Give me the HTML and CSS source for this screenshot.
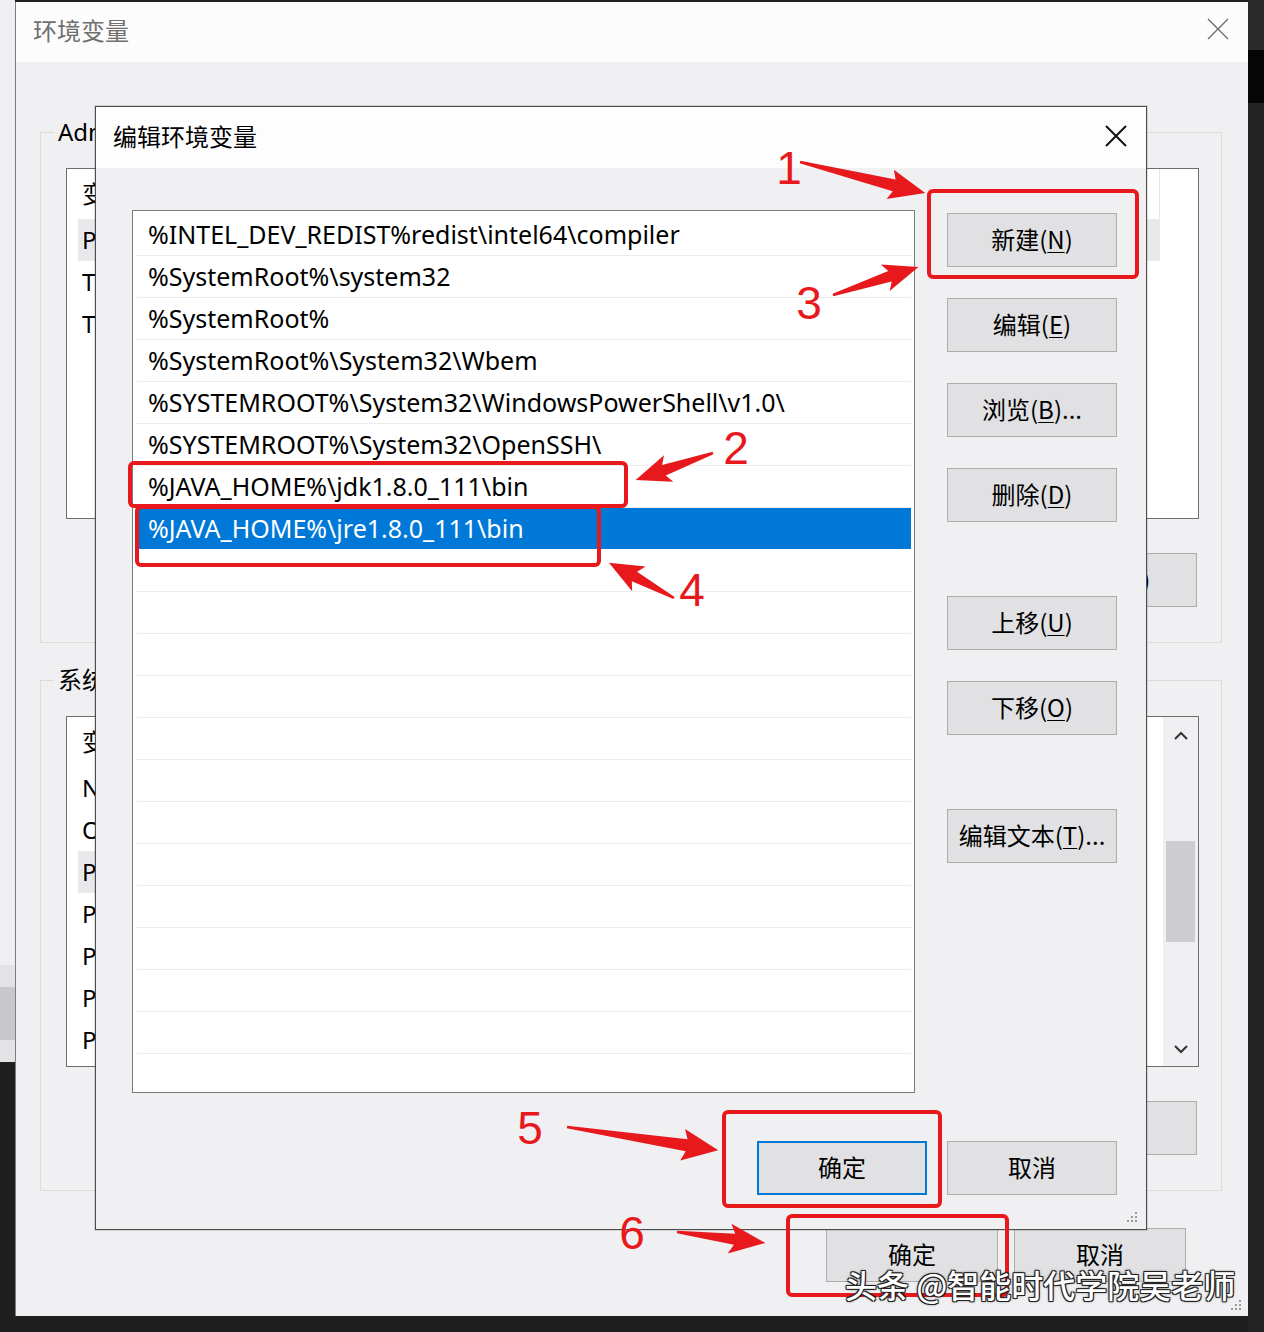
FILE: index.html
```html
<!DOCTYPE html>
<html lang="zh-CN">
<head>
<meta charset="utf-8">
<title>编辑环境变量</title>
<link rel="stylesheet" href="styles.css">
</head>
<body>
<div class="screen">
  <div class="edge-left">
    <div class="edge-fill"></div>
    <div class="edge-btn"><div class="edge-btn-face"></div></div>
  </div>

  <div class="env-window">
    <div class="titlebar">
      <span class="title">环境变量</span>
      <svg class="close-outer" width="22" height="22" viewBox="0 0 22 22"><path d="M1 1L21 21M21 1L1 21" stroke="#6b6b6b" stroke-width="1.3" fill="none"/></svg>
    </div>
    <div class="env-body">
      <div class="group">
        <span class="legend">Administrator 的用户变量</span>
        <div class="listview">
          <div class="lv-rows">
            <div class="lv-head">变量</div>
            <div class="lv-row hl">Path</div>
            <div class="lv-row">TEMP</div>
            <div class="lv-row">TMP</div>
          </div>
        </div>
        <div class="btn-row">
          <div class="obtn">新建(<u>N</u>)...</div>
          <div class="obtn">编辑(<u>E</u>)...</div>
          <div class="obtn">删除(<u>D</u>)</div>
        </div>
      </div>

      <div class="group">
        <span class="legend">系统变量(<u>S</u>)</span>
        <div class="listview">
          <div class="lv-rows">
            <div class="lv-head">变量</div>
            <div class="lv-row">NUMBER_OF_PROCESSORS</div>
            <div class="lv-row">OS</div>
            <div class="lv-row hl">Path</div>
            <div class="lv-row">PATHEXT</div>
            <div class="lv-row">PROCESSOR_ARCHITECTURE</div>
            <div class="lv-row">PROCESSOR_IDENTIFIER</div>
            <div class="lv-row">PROCESSOR_LEVEL</div>
          </div>
          <div class="scrollbar">
            <svg class="chev" width="16" height="10" viewBox="0 0 16 10"><path d="M2 8L8 2L14 8" stroke="#333" stroke-width="2" fill="none"/></svg>
            <div class="track"><div class="thumb"></div></div>
            <svg class="chev" width="16" height="10" viewBox="0 0 16 10"><path d="M2 2L8 8L14 2" stroke="#333" stroke-width="2" fill="none"/></svg>
          </div>
        </div>
        <div class="btn-row">
          <div class="obtn">新建(<u>W</u>)...</div>
          <div class="obtn">编辑(<u>I</u>)...</div>
          <div class="obtn">删除(<u>L</u>)</div>
        </div>
      </div>

      <div class="footer">
        <div class="obtn fbtn">确定</div>
        <div class="obtn fbtn">取消</div>
      </div>
    </div>
    <svg class="grip grip-outer" width="10" height="10" viewBox="0 0 10 10"><g fill="#9a9a9a"><rect x="8" y="0" width="2" height="2"/><rect x="4" y="4" width="2" height="2"/><rect x="8" y="4" width="2" height="2"/><rect x="0" y="8" width="2" height="2"/><rect x="4" y="8" width="2" height="2"/><rect x="8" y="8" width="2" height="2"/></g></svg>
  </div>

  <div class="edge-right">
    <div class="edge-r1"></div>
    <div class="edge-r2"></div>
  </div>
</div>

<div class="dialog">
  <div class="dlg-title">
    <span class="dlg-title-text">编辑环境变量</span>
    <svg class="close-inner" width="24" height="24" viewBox="0 0 24 24"><path d="M2 2L22 22M22 2L2 22" stroke="#111" stroke-width="2" fill="none"/></svg>
  </div>
  <div class="dlg-body">
    <div class="dlg-main">
      <div class="pathlist">
        <div class="prow">%INTEL_DEV_REDIST%redist\intel64\compiler</div>
        <div class="prow">%SystemRoot%\system32</div>
        <div class="prow">%SystemRoot%</div>
        <div class="prow">%SystemRoot%\System32\Wbem</div>
        <div class="prow">%SYSTEMROOT%\System32\WindowsPowerShell\v1.0\</div>
        <div class="prow">%SYSTEMROOT%\System32\OpenSSH\</div>
        <div class="prow">%JAVA_HOME%\jdk1.8.0_111\bin</div>
        <div class="prow sel">%JAVA_HOME%\jre1.8.0_111\bin</div>
        <div class="prow"></div>
        <div class="prow"></div>
        <div class="prow"></div>
        <div class="prow"></div>
        <div class="prow"></div>
        <div class="prow"></div>
        <div class="prow"></div>
        <div class="prow"></div>
        <div class="prow"></div>
        <div class="prow"></div>
        <div class="prow"></div>
        <div class="prow"></div>
      </div>
      <div class="dlg-side">
        <div class="dbtn">新建(<u>N</u>)</div>
        <div class="dbtn">编辑(<u>E</u>)</div>
        <div class="dbtn">浏览(<u>B</u>)...</div>
        <div class="dbtn">删除(<u>D</u>)</div>
        <div class="dbtn group-start">上移(<u>U</u>)</div>
        <div class="dbtn">下移(<u>O</u>)</div>
        <div class="dbtn group-start">编辑文本(<u>T</u>)...</div>
      </div>
    </div>
    <div class="dlg-foot">
      <div class="dbtn default">确定</div>
      <div class="dbtn">取消</div>
    </div>
  </div>
  <svg class="grip grip-inner" width="10" height="10" viewBox="0 0 10 10"><g fill="#9a9a9a"><rect x="8" y="0" width="2" height="2"/><rect x="4" y="4" width="2" height="2"/><rect x="8" y="4" width="2" height="2"/><rect x="0" y="8" width="2" height="2"/><rect x="4" y="8" width="2" height="2"/><rect x="8" y="8" width="2" height="2"/></g></svg>
</div>

<svg class="annot" width="1264" height="1332" viewBox="0 0 1264 1332">
  <g fill="none" stroke="#e8191c" stroke-width="4">
    <rect x="929" y="191" width="208" height="86" rx="4"/>
    <rect x="130" y="463" width="496" height="43" rx="4"/>
    <rect x="137" y="507" width="462" height="58" rx="4"/>
    <rect x="724" y="1112" width="216" height="94" rx="4"/>
    <rect x="788" y="1216" width="219" height="79" rx="4"/>
  </g>
  <g fill="#e8191c">
    <polygon transform="translate(800,162) rotate(13.9)" points="0,-1.2 97,-6 93,-15 129,0 93,15 97,6 0,1.2"/>
    <polygon transform="translate(833,295) rotate(-18.2)" points="0,-1.2 60,-5.5 55,-14 90,0 55,14 60,5.5 0,1.2"/>
    <polygon transform="translate(713,453) rotate(160.7)" points="0,-1.2 52,-5.5 47,-14 82,0 47,14 52,5.5 0,1.2"/>
    <polygon transform="translate(674,598) rotate(-151.5)" points="0,-1.2 45,-5.5 40,-14 74,0 40,14 45,5.5 0,1.2"/>
    <polygon transform="translate(567,1127) rotate(8.7)" points="0,-1.2 121,-6 117,-16 153,0 117,16 121,6 0,1.2"/>
    <polygon transform="translate(677,1232) rotate(7.1)" points="0,-1.2 58,-5.5 53,-15 89,0 53,15 58,5.5 0,1.2"/>
  </g>
  <g class="nums" fill="#e8191c">
    <text x="789" y="184">1</text>
    <text x="809" y="319">3</text>
    <text x="736" y="464">2</text>
    <text x="692" y="606">4</text>
    <text x="530" y="1144">5</text>
    <text x="632" y="1249">6</text>
  </g>
</svg>

<div class="watermark">头条 @智能时代学院吴老师</div>
</body>
</html>
```

FILE: styles.css
```css
* { box-sizing: border-box; }
html, body { margin: 0; padding: 0; }
body {
  width: 1264px;
  height: 1332px;
  overflow: hidden;
  position: relative;
  background: #1f1f1f;
  font-family: "Noto Sans", "Noto Sans CJK SC", sans-serif;
  color: #000;
}
u { text-decoration-thickness: 1px; text-underline-offset: 3px; }

.screen { display: flex; height: 1332px; }

/* left edge: another window peeking out */
.edge-left { width: 15px; display: flex; flex-direction: column; }
.edge-fill { height: 965px; background: #efeff1; }
.edge-btn { height: 97px; background: #e3e3e5; padding-top: 22px; }
.edge-btn-face { height: 53px; background: #c8c8ca; }

.edge-right { width: 16px; display: flex; flex-direction: column; background: #232323; }
.edge-r1 { height: 50px; background: #2a2a2a; }
.edge-r2 { height: 53px; background: #050505; }

/* outer window */
.env-window {
  position: relative;
  width: 1233px;
  height: 1314px;
  margin-top: 2px;
  border-left: 1px solid #7d7d7d;
  background: #f0f0f2;
  display: flex;
  flex-direction: column;
}
.titlebar {
  height: 60px;
  background: #fcfcfd;
  display: flex;
  align-items: center;
  justify-content: space-between;
  padding: 0 19px 6px 17px;
}
.title {
  font-family: "Noto Sans CJK SC", sans-serif;
  font-size: 24px;
  color: #707070;
}
.env-body { padding: 70px 26px 0 24px; }

.group {
  position: relative;
  border: 1px solid #dcdcdc;
  padding: 35px 22px 35px 25px;
}
.group + .group { margin-top: 37px; }
.legend {
  position: absolute;
  top: -16px;
  left: 13px;
  padding: 0 4px;
  background: #f0f0f2;
  font-size: 24px;
  line-height: 30px;
  font-family: "Noto Sans", "Noto Sans CJK SC", sans-serif;
}
.listview {
  height: 351px;
  border: 1px solid #6e6e6e;
  background: #fff;
  display: flex;
  overflow: hidden;
}
.lv-rows { flex: 1; padding-left: 11px; }
.lv-head {
  height: 50px;
  line-height: 50px;
  padding-left: 4px;
  font-size: 24px;
  margin-right: 38px;
  border-right: 1px solid #e4e4e4;
}
.lv-row {
  height: 42px;
  line-height: 42px;
  padding-left: 4px;
  font-size: 24px;
  margin-right: 38px;
  white-space: nowrap;
}
.lv-row.hl { background: #e9e9ec; }
.scrollbar {
  width: 35px;
  background: #f0f0f2;
  display: flex;
  flex-direction: column;
  align-items: center;
  padding: 14px 2px 12px;
}
.chev { display: block; }
.track { flex: 1; width: 100%; padding-top: 100px; }
.thumb { height: 101px; background: #cdcdcf; margin: 0 1px; }

.btn-row {
  margin-top: 34px;
  margin-right: 2px;
  display: flex;
  justify-content: flex-end;
  gap: 14px;
}
.obtn, .dbtn {
  height: 54px;
  background: #e1e1e3;
  border: 1px solid #adadad;
  display: flex;
  align-items: center;
  justify-content: center;
  padding-bottom: 4px;
  font-family: "Noto Sans CJK SC", sans-serif;
  font-size: 24px;
  color: #000;
  white-space: nowrap;
}
.obtn { width: 174px; }
.footer {
  margin-top: 37px;
  margin-right: 36px;
  display: flex;
  justify-content: flex-end;
  gap: 16px;
}
.fbtn { width: 172px; }

.grip { position: absolute; }
.grip-outer { right: 7px; bottom: 6px; }
.grip-inner { right: 9px; bottom: 7px; }

/* edit dialog (a window lying over the first one) */
.dialog {
  position: absolute;
  left: 95px;
  top: 106px;
  width: 1052px;
  height: 1124px;
  border: 1px solid #4d4d4d;
  background: #f0f0f2;
  display: flex;
  flex-direction: column;
  box-shadow: 0 0 0 1px rgba(0,0,0,0.12);
}
.dlg-title {
  height: 61px;
  background: #fdfdfe;
  display: flex;
  align-items: center;
  justify-content: space-between;
  padding: 0 18px 4px 17px;
}
.dlg-title-text {
  font-family: "Noto Sans CJK SC", sans-serif;
  font-size: 24px;
  color: #000;
}
.dlg-body {
  flex: 1;
  padding: 42px 29px 34px 36px;
  display: flex;
  flex-direction: column;
}
.dlg-main { display: flex; gap: 32px; height: 883px; }
.pathlist {
  width: 783px;
  height: 883px;
  border: 1px solid #7a7a7a;
  background: #fff;
  padding: 3px 3px 0 4px;
  overflow: hidden;
}
.prow {
  height: 42px;
  line-height: 41px;
  border-bottom: 1px solid #ececec;
  padding-left: 11px;
  font-size: 25px;
  white-space: nowrap;
}
.prow.sel {
  background: #0078d7;
  color: #fff;
  border-bottom-color: #fff;
}
.dlg-side {
  width: 170px;
  display: flex;
  flex-direction: column;
  gap: 31px;
  padding-top: 3px;
}
.dbtn { width: 170px; }
.dbtn.group-start { margin-top: 43px; }
.dlg-foot {
  margin-top: 48px;
  display: flex;
  justify-content: flex-end;
  gap: 20px;
}
.dbtn.default { border: 2px solid #0078d7; }

/* annotations drawn on top of the screenshot */
.annot { position: absolute; left: 0; top: 0; pointer-events: none; }
.nums text {
  font-family: "Liberation Sans Narrow", "Liberation Sans", sans-serif;
  font-size: 46px;
  text-anchor: middle;
}
.watermark {
  position: absolute;
  left: 845px;
  top: 1263px;
  font-family: "Noto Sans CJK SC", sans-serif;
  font-size: 32px;
  font-weight: 500;
  line-height: 42px;
  color: #fff;
  white-space: nowrap;
  text-shadow: -1px -1px 0 #222, 1px -1px 0 #222, -1px 1px 0 #222, 1px 1px 0 #222, 0 0 3px #000;
}
```
